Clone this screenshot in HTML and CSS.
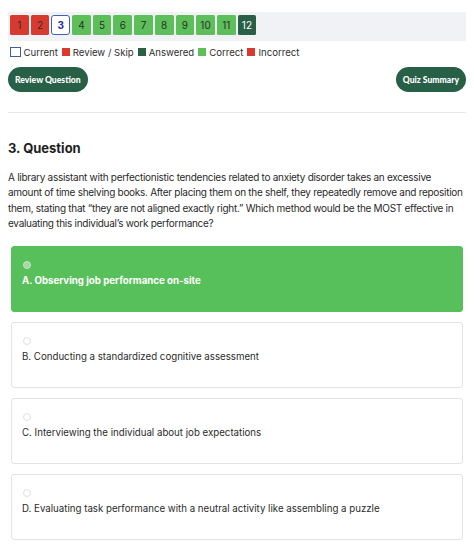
FILE: index.html
```html
<!DOCTYPE html>
<html>
<head>
<meta charset="utf-8">
<link rel="stylesheet" href="styles.css">
</head>
<body>
<div class="page">
  <div class="navbar">
    <span class="qbox red">1</span>
    <span class="qbox red">2</span>
    <span class="qbox current">3</span>
    <span class="qbox green">4</span>
    <span class="qbox green">5</span>
    <span class="qbox green">6</span>
    <span class="qbox green">7</span>
    <span class="qbox green">8</span>
    <span class="qbox green">9</span>
    <span class="qbox green">10</span>
    <span class="qbox green">11</span>
    <span class="qbox dark">12</span>
  </div>
  <div class="legend">
    <span class="sw sw-current"></span><span class="lt">Current</span>
    <span class="sw sw-red"></span><span class="lt">Review / Skip</span>
    <span class="sw sw-dark"></span><span class="lt">Answered</span>
    <span class="sw sw-green"></span><span class="lt">Correct</span>
    <span class="sw sw-red"></span><span class="lt">Incorrect</span>
  </div>
  <div class="actions">
    <button class="pill">Review Question</button>
    <button class="pill">Quiz Summary</button>
  </div>
  <hr class="divider">
  <h2 class="qtitle">3. Question</h2>
  <p class="qtext">A library assistant with perfectionistic tendencies related to anxiety disorder takes an excessive<br>amount of time shelving books. After placing them on the shelf, they repeatedly remove and reposition<br>them, stating that “they are not aligned exactly right.” Which method would be the MOST effective in<br>evaluating this individual’s work performance?</p>
  <div class="options">
    <div class="option correct">
      <span class="radio"></span>
      <div class="otext">A. Observing job performance on-site</div>
    </div>
    <div class="option">
      <span class="radio"></span>
      <div class="otext">B. Conducting a standardized cognitive assessment</div>
    </div>
    <div class="option">
      <span class="radio"></span>
      <div class="otext">C. Interviewing the individual about job expectations</div>
    </div>
    <div class="option">
      <span class="radio"></span>
      <div class="otext">D. Evaluating task performance with a neutral activity like assembling a puzzle</div>
    </div>
  </div>
</div>
</body>
</html>
```

FILE: styles.css
```css
html, body {
  margin: 0;
  padding: 0;
  background: #ffffff;
}
body {
  font-family: Inter, "Noto Sans", "Liberation Sans", sans-serif;
  color: #2b2b2b;
}
.page {
  padding: 12px 8px 0 8px;
}
.navbar {
  background: #f1f2f5;
  height: 29px;
  box-sizing: border-box;
  padding: 3px 2px 0 2px;
  display: flex;
  gap: 2px;
}
.qbox {
  width: 18.7px;
  height: 20px;
  box-sizing: border-box;
  display: flex;
  align-items: center;
  justify-content: center;
  font-size: 10px;
  border-radius: 1.5px;
  color: #2d2d2d;
}
.qbox.red { background: #d93a2f; }
.qbox.green { background: #5cbf5a; }
.qbox.dark { background: #2b5e46; color: #ffffff; }
.qbox.current {
  background: #ffffff;
  border: 1.5px solid #4062b5;
  color: #1d2aa8;
  font-weight: 700;
  border-radius: 3px;
}
.legend {
  display: flex;
  align-items: center;
  height: 12px;
  margin-top: 5px;
  padding-left: 2px;
  font-size: 9.6px;
  color: #2e2e2e;
}
.sw {
  display: inline-block;
  box-sizing: border-box;
  width: 8px;
  height: 8px;
  margin-right: 3px;
}
.sw-current {
  width: 10.5px;
  height: 10.5px;
  border: 1.3px solid #3d5ea8;
  margin-right: 3px;
}
.sw-red { background: #d93a2f; }
.sw-dark { background: #2b5e46; }
.sw-green { background: #5cbf5a; }
.lt { margin-right: 4px; }
.actions {
  display: flex;
  justify-content: space-between;
  margin-top: 9px;
}
.pill {
  height: 25px;
  border: none;
  border-radius: 13px;
  background: #285f47;
  color: #ffffff;
  font-family: Lato, Inter, sans-serif;
  font-weight: 900;
  font-size: 8.6px;
  padding: 0 7px;
  cursor: pointer;
}
.divider {
  border: none;
  border-top: 1px solid #e7e8ea;
  margin: 20px 0 0 0;
}
.qtitle {
  font-size: 13px;
  font-weight: 700;
  margin: 27px 0 0 0;
  line-height: 16px;
  color: #1e1e1e;
}
.qtext {
  font-size: 10px;
  letter-spacing: -0.28px;
  line-height: 15.3px;
  margin: 14px 0 0 0;
  color: #2a2a2a;
  white-space: nowrap;
}
.options {
  display: flex;
  flex-direction: column;
  gap: 10px;
  margin: 15px 3px 0 3px;
}
.option {
  height: 66px;
  box-sizing: border-box;
  border: 1px solid #e2e3e5;
  border-radius: 3px;
  padding: 14px 10px 0 10px;
  background: #ffffff;
}
.option.correct {
  background: #58c05a;
  border-color: #58c05a;
  color: #ffffff;
  font-weight: 700;
}
.radio {
  display: block;
  width: 6px;
  height: 6px;
  border-radius: 50%;
  border: 1px solid #e0e0e0;
  margin-left: 1px;
}
.option.correct .radio {
  background: #a8d6a8;
  border-color: #c5e6c5;
}
.otext {
  font-size: 9.7px;
  line-height: 14px;
  margin-top: 5px;
}
```
